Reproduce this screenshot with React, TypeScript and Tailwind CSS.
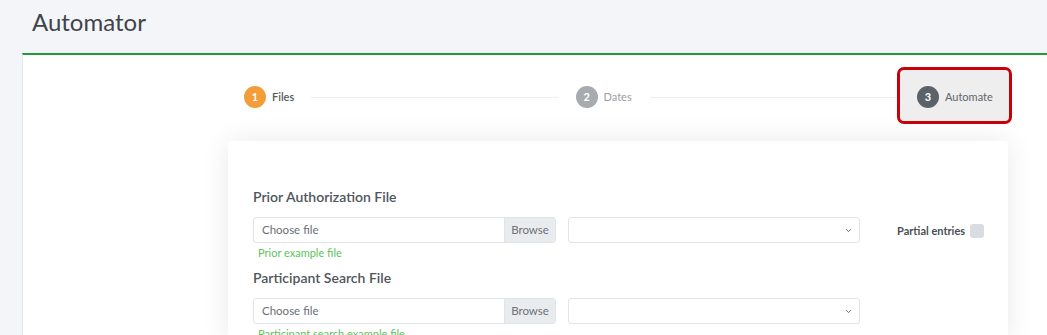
import { ChevronDown } from "lucide-react";

function FileRow({ label, help }: { label: string; help: string }) {
  return (
    <div>
      <div className="text-[14px] leading-[18px] font-semibold text-[#50555b]">{label}</div>
      <div className="mt-[11px] flex items-center">
        <div className="flex h-[26px] w-[303px] rounded-[3px] border border-[#e1e4e8] overflow-hidden">
          <div className="flex-1 flex items-center pl-[8px] text-[11.5px] text-[#6b7075]">Choose file</div>
          <div className="w-[51px] flex items-center justify-center bg-[#e9ecef] border-l border-[#e1e4e8] text-[11.5px] text-[#6c7176]">
            Browse
          </div>
        </div>
        <div className="ml-[12px] flex h-[26px] w-[292px] items-center justify-end rounded-[3px] border border-[#e1e4e8] pr-[6px]">
          <ChevronDown size={9} strokeWidth={2.5} className="text-[#666]" />
        </div>
      </div>
      <div className="mt-[3px] pl-[5px] text-[11px] leading-[13px] text-[#5cc45c]">{help}</div>
    </div>
  );
}

export default function App() {
  return (
    <div className="h-[335px] overflow-hidden bg-[#f4f5f9] font-['Lato',sans-serif]">
      <h1 className="pl-[32px] pt-[6px] text-[24px] leading-[32px] text-[#3f444a]">Automator</h1>
      <div className="ml-[22px] mt-[15px] bg-white border-t-2 border-t-[#1e9b3a] border-l border-l-[#e6e7ea] h-[300px]">
        {/* Stepper */}
        <div className="ml-[221px] mt-[12px] w-[768px] flex items-center">
          <div className="flex items-center mt-[3px]">
            <span className="w-[22px] h-[22px] rounded-full bg-[#f29d38] text-white text-[11px] font-bold flex items-center justify-center">1</span>
            <span className="ml-[6px] text-[11px] font-semibold text-[#555a60]">Files</span>
          </div>
          <div className="flex-1 h-px bg-[#eceef0] mx-[17px] mt-[3px]" />
          <div className="flex items-center mt-[3px]">
            <span className="w-[22px] h-[22px] rounded-full bg-[#a7abb0] text-white text-[11px] font-bold flex items-center justify-center">2</span>
            <span className="ml-[6px] text-[11px] text-[#9a9ea3]">Dates</span>
          </div>
          <div className="flex-1 h-px bg-[#eceef0] ml-[18px] mt-[3px]" />
          <div className="flex items-center w-[115px] h-[57px] pl-[17px] bg-[#eeeeee] border-[3px] border-[#c8000a] rounded-[7px]">
            <span className="w-[22px] h-[22px] rounded-full bg-[#5c6269] text-white text-[11px] font-bold flex items-center justify-center mt-[3px]">3</span>
            <span className="ml-[6px] text-[11px] text-[#5f646a] mt-[3px]">Automate</span>
          </div>
        </div>
        {/* Form card */}
        <div className="ml-[205px] mt-[17px] w-[780px] h-[200px] bg-white rounded-[3px] shadow-[0_0_28px_rgba(0,0,0,0.09)] pl-[25px] pt-[47px]">
          <div className="flex">
            <FileRow label="Prior Authorization File" help="Prior example file" />
            <div className="ml-[37px] mt-[35px] flex items-center h-[16px]">
              <span className="text-[11px] font-bold text-[#4a4f55]">Partial entries</span>
              <span className="ml-[5px] w-[14px] h-[14px] rounded-[3px] bg-[#d9dde1]" />
            </div>
          </div>
          <div className="mt-[10px]">
            <FileRow label="Participant Search File" help="Participant search example file" />
          </div>
        </div>
      </div>
    </div>
  );
}
